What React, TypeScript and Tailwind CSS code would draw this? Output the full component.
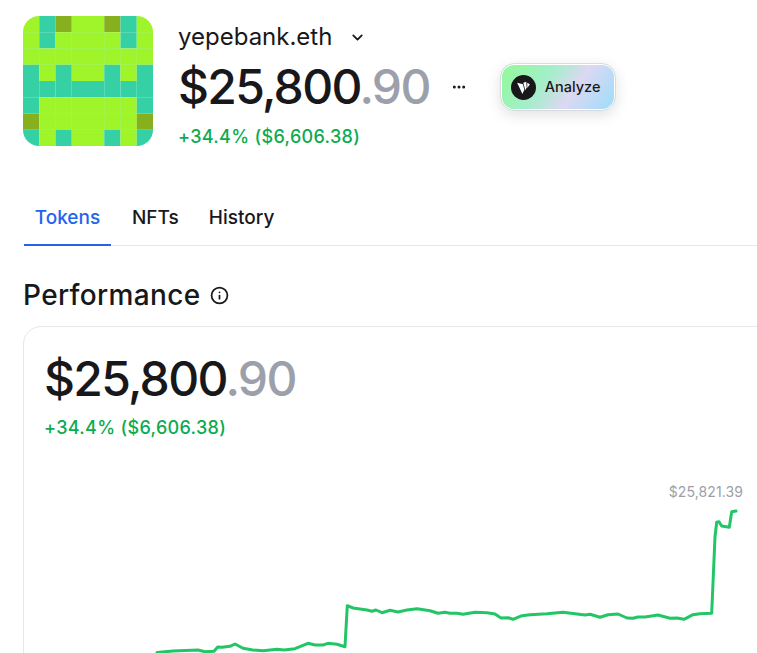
import { ChevronDown, Ellipsis, Info } from "lucide-react"

const L = "#a0f52a"
const T = "#36d0a5"
const D = "#87b01f"

const avatar = [
  [L, T, D, L, L, D, T, L],
  [L, T, L, L, L, L, T, L],
  [L, L, L, L, L, L, L, L],
  [T, L, T, L, L, T, L, T],
  [T, T, T, T, T, T, T, T],
  [T, L, L, L, L, L, L, T],
  [D, L, L, L, L, L, L, D],
  [T, L, T, L, L, T, L, T],
]

const line =
  "157,652.5 173,651 198,650 205,651.7 214,651.3 217.7,647 222,647.3 230,646.3 235,644 243,648.3 253,650 263,650.7 277,649.3 284,650 295,648.7 308,643.3 315,645 323,645 328,643.3 337,644.3 345,646.7 347.3,605.7 353,608 367,610 372,611.3 376,610 382,612.7 390,610.3 398,612 407,610 417,608.7 430,610.7 438,613.3 445,612.3 450,613.3 457,613.3 463,614.3 475,612.3 487,612.7 495,614 501,618 508,617.7 513,619.3 522,615.7 530,614.7 547,613.7 563,612.3 585,615 590,614.3 600,617.3 608,614.7 618,614 627,618 633,618.3 638,617 645,617 658,615 670,618.3 677,618 684,619.3 693,614.7 700,613.7 711.7,613.3 715,536.7 716.7,522.3 719,521.7 721.7,526 729.3,527.3 731.7,511.7 736,511"

function Avatar() {
  return (
    <svg viewBox="0 0 8 8" className="h-[130px] w-[130px] shrink-0 rounded-[16px]">
      {avatar.map((row, y) =>
        row.map((c, x) => (
          <rect key={`${x}-${y}`} x={x} y={y} width="1" height="1" fill={c} />
        ))
      )}
      {/* faint seams between neighbouring lime cells */}
      {avatar.map((row, y) =>
        row.map((c, x) => (
          <g key={`s${x}-${y}`} stroke="#8eef47" strokeWidth="0.04">
            {c === L && x < 7 && x !== 3 && row[x + 1] === L && <line x1={x + 1} y1={y} x2={x + 1} y2={y + 1} />}
            {c === L && y < 7 && avatar[y + 1][x] === L && <line x1={x} y1={y + 1} x2={x + 1} y2={y + 1} />}
          </g>
        ))
      )}
    </svg>
  )
}

function Amount() {
  return (
    <div className="text-[48px] leading-[58px] font-medium tracking-[-1.7px] text-[#18181b]">
      $25,800<span className="text-[#9ca0aa]">.90</span>
    </div>
  )
}

function AnalyzeButton() {
  return (
    <button className="ml-[33px] flex h-[48px] w-[116px] items-center gap-[9px] rounded-[14px] border border-[#d9dbe0] bg-[linear-gradient(125deg,#96f7a4_10%,#a4eecb_38%,#dcd8f2_62%,#a9dcf9_92%)] pl-[10px] shadow-[0_4px_14px_rgba(0,0,0,0.12)] ring-1 ring-white ring-inset">
      <span className="flex h-[25px] w-[25px] items-center justify-center rounded-full bg-[#18181b]">
        <svg viewBox="0 0 16 16" className="h-[17px] w-[17px]">
          <path d="M2 3.5 L7.5 5 L8.8 10 L7 14 Z" fill="#fff" />
          <path d="M7.8 3.5 L10.6 2.5 L11 8 L9.7 10.5 Z" fill="#fff" />
          <path d="M11.5 3.5 L14 5 L11.6 8.5 Z" fill="#fff" />
        </svg>
      </span>
      <span className="text-[14.5px] font-medium text-[#18181b]">Analyze</span>
    </button>
  )
}

export default function App() {
  return (
    <div className="h-[653px] w-[757px] overflow-hidden bg-white font-['Inter',sans-serif] text-[#18181b]">
      <div className="flex pt-[16px] pl-[23px]">
        <Avatar />
        <div className="ml-[25px]">
          <div className="flex h-[42px] items-center">
            <span className="text-[24px] leading-[30px]">yepebank.eth</span>
            <ChevronDown className="ml-[17px] h-[17px] w-[17px]" strokeWidth={2.5} />
          </div>
          <div className="flex items-center">
            <Amount />
            <Ellipsis className="ml-[21px] h-[16px] w-[16px]" strokeWidth={2.5} />
            <AnalyzeButton />
          </div>
          <div className="mt-[9px] text-[18px] leading-[24px] font-medium tracking-[0.33px] text-[#0bab50]">+34.4% ($6,606.38)</div>
        </div>
      </div>

      <div className="mt-[43px] ml-[24px] flex h-[54px] border-b border-[#e5e7eb] text-[19px] font-medium">
        <div className="-mb-px flex w-[87px] items-center justify-center border-b-2 border-[#2563eb] text-[#2563eb]">Tokens</div>
        <div className="ml-[21px] flex items-center">NFTs</div>
        <div className="ml-[30px] flex items-center">History</div>
      </div>

      <div className="mt-[28px] ml-[23px] flex h-[42px] items-center gap-[9px]">
        <span className="text-[28px] leading-[36px] font-medium tracking-[0.35px]">Performance</span>
        <Info className="h-[19px] w-[19px]" strokeWidth={2.2} />
      </div>

      <div className="mt-[10px] ml-[23px] w-[800px] rounded-[18px] border border-[#e5e7eb] pt-[23px] pb-[40px]">
        <div className="pl-[20px]">
          <Amount />
          <div className="mt-[8px] text-[18px] leading-[24px] font-medium tracking-[0.33px] text-[#0bab50]">+34.4% ($6,606.38)</div>
        </div>
        <div className="mt-[43px] w-[719px] text-right text-[14px] leading-[18px] tracking-[0.1px] text-[#9ca0aa]">$25,821.39</div>
        <svg className="block h-[152px] w-[733px]" viewBox="24 501 733 152" fill="none">
          <polyline points={line} stroke="#22c666" strokeWidth="3" strokeLinejoin="round" strokeLinecap="round" />
        </svg>
      </div>
    </div>
  )
}
